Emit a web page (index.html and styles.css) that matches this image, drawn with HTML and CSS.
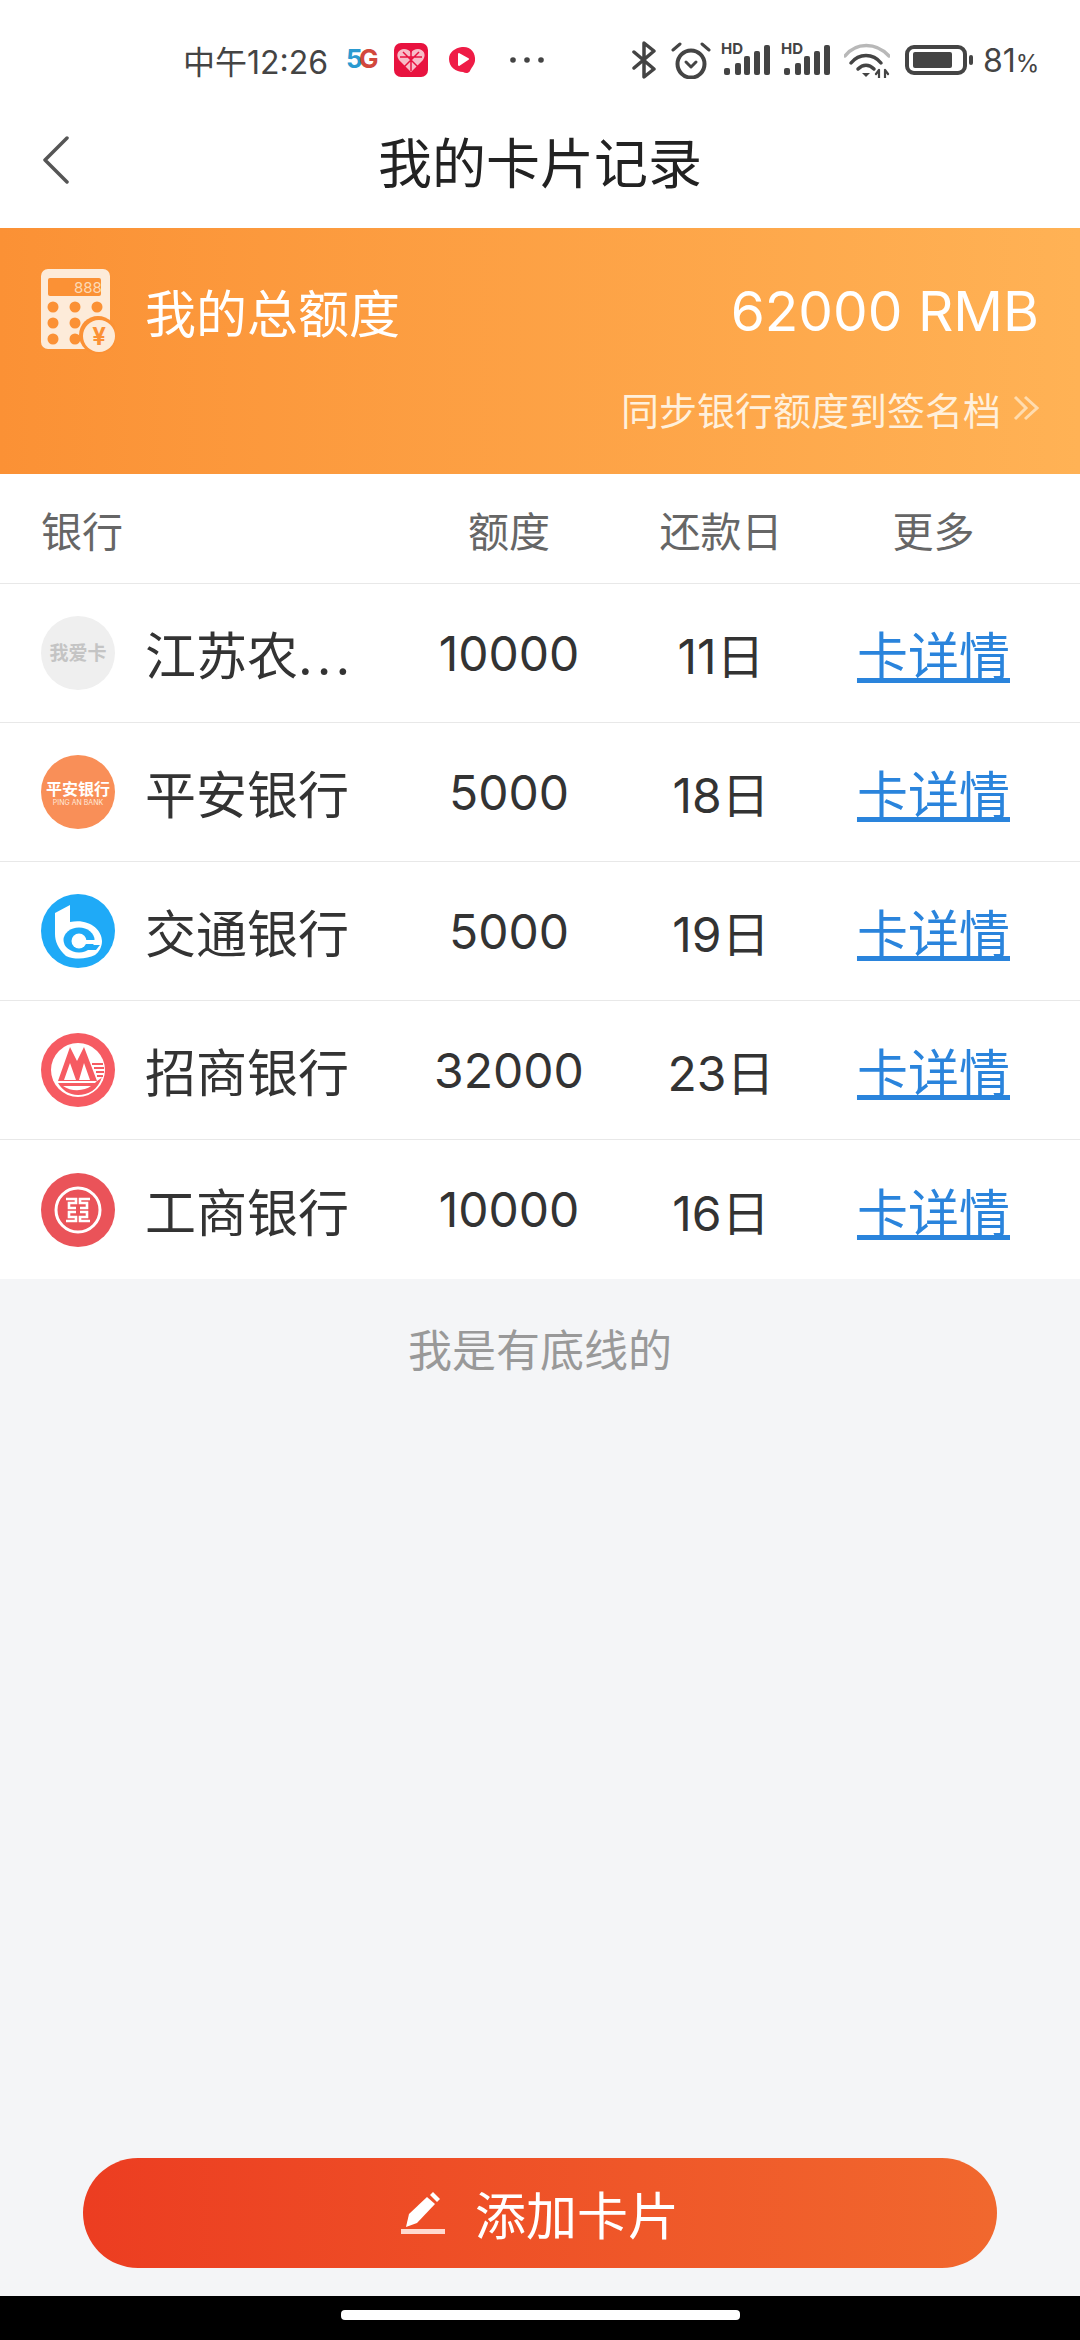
FILE: index.html
```html
<!DOCTYPE html>
<html lang="zh-CN">
<head>
	<meta charset="UTF-8">
	<title>我的卡片记录</title>
	<link rel="stylesheet" href="styles.css">
</head>
<body>
	<div id="page">
		<div class="status">
			<div class="status-left">
				<span class="time">中午12:26</span>
				<svg class="ic-5g" width="36" height="30" viewBox="0 0 36 30"><text x="1" y="23" class="five">5</text><text x="14" y="23" class="gee">G</text></svg>
				<svg class="ic-app" width="34" height="34" viewBox="0 0 34 34">
					<rect width="34" height="34" rx="7" fill="#e8123f"/>
					<path d="M17 29 L5 17 C1 11 5 6 10 6 C13 6 15.500 7 17 10 C18.500 7 21 6 24 6 C29 6 33 11 29 17 Z" fill="#f7bdc8"/>
					<path d="M17 8 V28 M6 14 H28 M9 9 L25 25 M25 9 L9 25" stroke="#e8123f" stroke-width="1.500"/>
				</svg>
				<svg class="ic-play" width="27" height="28" viewBox="0 0 27 28">
					<path d="M13 1 C21 0 27 6 26 15 C25 20 22 22 21 25 C19 28 16 27 14 26 C7 26 0 21 0 13 C0 6 6 2 13 1 Z" fill="#ef1c46"/>
					<path d="M10 8 L19 13 L10 19 Z" fill="#fff" stroke="#fff" stroke-width="2" stroke-linejoin="round"/>
				</svg>
				<svg class="ic-dots" width="36" height="8" viewBox="0 0 36 8"><circle cx="4" cy="4" r="2.800"/><circle cx="18" cy="4" r="2.800"/><circle cx="32" cy="4" r="2.800"/></svg>
			</div>
			<div class="status-right">
				<svg width="24" height="38" viewBox="0 0 24 38" fill="none" stroke="#444" stroke-width="3.500" stroke-linecap="round" stroke-linejoin="round"><path d="M2 11 L22 28 L12 36 V2 L22 10 L2 27"/></svg>
				<svg class="ic-alarm" width="40" height="37" viewBox="0 0 40 37" fill="none" stroke="#444" stroke-linecap="round" stroke-linejoin="round">
					<circle cx="20" cy="22" r="13.500" stroke-width="4"/>
					<path d="M2 8 L9 2 M38 8 L31 2" stroke-width="3"/>
					<path d="M15 20 L20 25 L25 20" stroke-width="3"/>
				</svg>
				<svg class="ic-signal" width="50" height="41" viewBox="0 -8 50 41">
					<text x="0" y="12" class="hd">HD</text>
					<rect x="3" y="26" width="6" height="7" rx="2"/>
					<rect x="14" y="21" width="6" height="12" rx="2"/>
					<rect x="23" y="14" width="6" height="19" rx="2"/>
					<rect x="33" y="9" width="6" height="24" rx="2"/>
					<rect x="43" y="3" width="6" height="30" rx="2"/>
				</svg>
				<svg class="ic-signal" width="50" height="41" viewBox="0 -8 50 41">
					<text x="0" y="12" class="hd">HD</text>
					<rect x="3" y="26" width="6" height="7" rx="2"/>
					<rect x="14" y="21" width="6" height="12" rx="2"/>
					<rect x="23" y="14" width="6" height="19" rx="2"/>
					<rect x="33" y="9" width="6" height="24" rx="2"/>
					<rect x="43" y="3" width="6" height="30" rx="2"/>
				</svg>
				<svg class="ic-wifi" width="46" height="35" viewBox="0 0 46 35" fill="none" stroke-linecap="round">
					<path d="M1 13 C12 -1 32 -1 45 13" stroke="#b8b8b8" stroke-width="3.500"/>
					<path d="M7 20 C15 10 29 10 37 20" stroke="#444" stroke-width="3.500"/>
					<path d="M14 26 C19 21 25 21 30 26" stroke="#444" stroke-width="3.500"/>
					<path d="M18 30 L26 30 L22 34 Z" fill="#444"/>
					<path d="M35 27 V35 M41 35 V27 M32 31 L35 27 M41 27 L44 31" stroke="#444" stroke-width="2.200"/>
				</svg>
				<svg class="ic-batt" width="68" height="30" viewBox="0 0 68 30">
					<rect x="2" y="2" width="58" height="26" rx="7" fill="none" stroke="#444" stroke-width="4"/>
					<rect x="8" y="7" width="39" height="16" rx="2" fill="#444"/>
					<rect x="64" y="10" width="4" height="10" rx="2" fill="#444"/>
				</svg>
				<span class="pct">81<small>%</small></span>
			</div>
		</div>

		<div class="header">
			<svg class="back" width="28" height="48" viewBox="0 0 28 48" fill="none" stroke="#555" stroke-width="3.500" stroke-linecap="round" stroke-linejoin="round"><path d="M25 2 L3 24 L25 46"/></svg>
			<h1 class="title">我的卡片记录</h1>
		</div>

		<div class="banner">
			<div class="banner-top">
				<div class="banner-name">
					<svg width="74" height="85" viewBox="0 0 74 85">
						<rect width="69" height="80" rx="7" fill="#fdebd9"/>
						<rect x="7" y="9" width="53" height="18" rx="2" fill="#fb9135"/>
						<text x="33" y="24" class="calc-num">888</text>
						<g fill="#fb9135">
							<circle cx="12" cy="38" r="5.500"/><circle cx="34" cy="38" r="5.500"/><circle cx="56" cy="38" r="5.500"/>
							<circle cx="12" cy="54" r="5.500"/><circle cx="34" cy="54" r="5.500"/>
							<circle cx="12" cy="70" r="5.500"/><circle cx="34" cy="70" r="5.500"/>
							<circle cx="57" cy="66" r="19"/>
						</g>
						<circle cx="58" cy="67" r="16" fill="#fdebd9"/>
						<text x="58" y="76" class="calc-yen">¥</text>
					</svg>
					<span class="banner-label">我的总额度</span>
				</div>
				<span class="total">62000 RMB</span>
			</div>
			<div class="banner-sync">
				<span>同步银行额度到签名档</span>
				<svg width="26" height="26" viewBox="0 0 26 26" fill="none" stroke="#ffdcae" stroke-width="3"><path d="M2 2 L13 13 L2 24 M12 2 L24 13 L12 24"/></svg>
			</div>
		</div>

		<div class="table">
			<div class="row row-head">
				<span class="col-bank">银行</span>
				<span>额度</span>
				<span>还款日</span>
				<span>更多</span>
			</div>
			<div class="row">
				<div class="col-bank">
					<svg class="logo" viewBox="0 0 74 74">
						<circle cx="37" cy="37" r="37" fill="#efefef"/>
						<text x="37" y="44" class="logo-gray">我爱卡</text>
					</svg>
					<span>江苏农<span class="dots">...</span></span>
				</div>
				<span>10000</span>
				<span>11日</span>
				<a href="#" class="more">卡详情</a>
			</div>
			<div class="row">
				<div class="col-bank">
					<svg class="logo" viewBox="0 0 74 74">
						<circle cx="37" cy="37" r="37" fill="#f98f58"/>
						<text x="37" y="40" class="logo-pa">平安银行</text>
						<text x="37" y="50" class="logo-pa-en">PING AN BANK</text>
					</svg>
					<span>平安银行</span>
				</div>
				<span>5000</span>
				<span>18日</span>
				<a href="#" class="more">卡详情</a>
			</div>
			<div class="row">
				<div class="col-bank">
					<svg class="logo" viewBox="0 0 74 74">
						<circle cx="37" cy="37" r="37" fill="#1faaf7"/>
						<path d="M14 19 L29 11 V28 C47 24 61 35 61 47 C61 53 58 58 54 61 C46 65 34 66 25 62 C17 55 14 47 14 40 Z" fill="#fff"/>
						<ellipse cx="38" cy="46" rx="15.500" ry="12.500" fill="#1faaf7"/>
						<circle cx="38" cy="47" r="7.500" fill="#fff"/>
						<rect x="38" y="46" width="19" height="4" fill="#fff"/>
						<path d="M46 51 H59 L55 56 H44 Z" fill="#1faaf7"/>
					</svg>
					<span>交通银行</span>
				</div>
				<span>5000</span>
				<span>19日</span>
				<a href="#" class="more">卡详情</a>
			</div>
			<div class="row">
				<div class="col-bank">
					<svg class="logo" viewBox="0 0 74 74">
						<circle cx="37" cy="37" r="37" fill="#f65b62"/>
						<circle cx="37" cy="37" r="27" fill="#fff"/>
						<path d="M17 48 L29 14 L36 28 L43 14 L56 48 Z" fill="#f65b62"/>
						<path d="M23 47 L29 30 L35 47 Z M38 47 L43 30 L49 47 Z" fill="#fff"/>
						<path d="M51 31 H62 M53 35 H63 M55 39 H63 M56 43 H62" stroke="#f65b62" stroke-width="1.800"/>
						<path d="M17 50 H54 C56 47 59 47 61 44 C57 57 47 62 37 62 C28 62 21 57 17 50 Z" fill="#f65b62"/>
						<path d="M22 53 H50 C44 58 30 59 22 53 Z" fill="#fff"/>
					</svg>
					<span>招商银行</span>
				</div>
				<span>32000</span>
				<span>23日</span>
				<a href="#" class="more">卡详情</a>
			</div>
			<div class="row">
				<div class="col-bank">
					<svg class="logo" viewBox="0 0 74 74">
						<circle cx="37" cy="37" r="37" fill="#ea5359"/>
						<circle cx="37" cy="37" r="22" fill="none" stroke="#fff" stroke-width="3"/>
						<path d="M25 26 H35 V30 H28 V35 H35 M25 48 H35 V44 H28 V39 H35 M49 26 H39 V30 H46 V35 H39 M49 48 H39 V44 H46 V39 H39" fill="none" stroke="#fff" stroke-width="2.600"/>
					</svg>
					<span>工商银行</span>
				</div>
				<span>10000</span>
				<span>16日</span>
				<a href="#" class="more">卡详情</a>
			</div>
		</div>

		<p class="end-tip">我是有底线的</p>

		<div class="add-wrap">
			<div class="add-btn">
				<svg width="44" height="42" viewBox="0 0 44 42">
					<path d="M5 35 L8 22 L26 5 L34 12 L16 31 Z" fill="#fff"/>
					<path d="M29 3 L32 0 L39 7 L36 10 Z" fill="#fff"/>
					<rect y="37" width="44" height="5" fill="#ffd9cf"/>
				</svg>
				<span>添加卡片</span>
			</div>
		</div>

		<div class="nav-bar"><i class="home-pill"></i></div>
	</div>
</body>
</html>
```

FILE: styles.css
```css
*{
	margin: 0;
	padding: 0;
	box-sizing: border-box;
}
body{
	font-family: Inter, "Noto Sans CJK SC", sans-serif;
	color: #333;
	background: #f4f5f7;
}
a{
	color: #2a84dc;
}
.hd{
	font-size: 15px;
	font-weight: 700;
	fill: #444;
}
#page{
	width: 1080px;
	height: 2340px;
	display: flex;
	flex-direction: column;
}

/* status bar */
.status{
	height: 92px;
	padding: 28px 46px 0 183px;
	background: #fff;
	display: flex;
	justify-content: space-between;
	align-items: center;
	color: #444;
}
.status-left, .status-right{
	display: flex;
	align-items: center;
}
.time{
	font-size: 32px;
	width: 162px;
}
.five{
	font-size: 26px;
	font-weight: 700;
	fill: #2a9ad0;
}
.gee{
	font-size: 26px;
	font-weight: 700;
	fill: #d2483c;
}
.ic-app{
	margin-left: 13px;
}
.ic-play{
	margin-left: 21px;
}
.ic-dots{
	margin-left: 33px;
	fill: #444;
}
.ic-alarm{
	margin-left: 15px;
}
.ic-signal{
	margin-left: 10px;
	margin-bottom: 11px;
	fill: #444;
}
.ic-wifi{
	margin-left: 13px;
}
.ic-batt{
	margin-left: 15px;
}
.pct{
	margin-left: 10px;
	font-size: 32px;
	width: 51px;
	white-space: nowrap;
}
.pct small{
	font-size: 24px;
}

/* title */
.header{
	height: 136px;
	background: #fff;
	position: relative;
	display: flex;
	align-items: center;
	justify-content: center;
}
.back{
	position: absolute;
	left: 42px;
	top: 44px;
}
.title{
	font-size: 54px;
	font-weight: 400;
	color: #222;
}

/* orange banner */
.banner{
	height: 246px;
	padding: 38px 41px 0;
	background: linear-gradient(90deg, #fb9135, #ffb255);
	color: #fff;
}
.banner-top{
	height: 90px;
	display: flex;
	justify-content: space-between;
	align-items: center;
}
.banner-name{
	display: flex;
	align-items: center;
	gap: 30px;
}
.banner-label{
	font-size: 51px;
}
.calc-num{
	font-size: 15px;
	fill: #fdd9b4;
}
.calc-yen{
	font-size: 24px;
	font-weight: 700;
	fill: #fb9135;
	text-anchor: middle;
}
.total{
	font-size: 55px;
}
.banner-sync{
	margin-top: 27px;
	height: 50px;
	display: flex;
	justify-content: flex-end;
	align-items: center;
	gap: 12px;
	font-size: 38px;
	color: #fff0dc;
}

/* card table */
.table{
	background: #fff;
}
.row{
	height: 139px;
	padding: 0 40px 0 41px;
	display: grid;
	grid-template-columns: 362px 212px 212px 213px;
	align-items: center;
	justify-items: center;
	font-size: 48px;
	border-bottom: 1px solid #e8e8e8;
}
.row:last-child{
	border-bottom: 0;
}
.row-head{
	height: 110px;
	font-size: 41px;
	color: #666;
}
.col-bank{
	justify-self: start;
	display: flex;
	align-items: center;
	gap: 30px;
	font-size: 51px;
}
.row-head .col-bank{
	font-size: 41px;
}
.more{
	font-size: 51px;
}
.dots{
	letter-spacing: 4px;
}
.logo{
	width: 74px;
	height: 74px;
	flex: none;
}
.logo-gray{
	font-size: 19px;
	font-weight: 700;
	fill: #c4c4c4;
	text-anchor: middle;
}
.logo-pa{
	font-size: 16px;
	font-weight: 700;
	fill: #fff;
	text-anchor: middle;
}
.logo-pa-en{
	font-size: 7px;
	fill: #ffe9dc;
	text-anchor: middle;
}
.end-tip{
	margin-top: 44px;
	font-size: 44px;
	line-height: 56px;
	color: #999;
	text-align: center;
}

/* bottom */
.add-wrap{
	margin-top: auto;
	padding: 0 83px 28px;
}
.add-btn{
	height: 110px;
	border-radius: 55px;
	background: linear-gradient(90deg, #ec3d21, #f1682e);
	color: #fff;
	font-size: 51px;
	display: flex;
	justify-content: center;
	align-items: center;
	gap: 30px;
}
.nav-bar{
	height: 44px;
	background: #000;
	padding-top: 14px;
	display: flex;
	justify-content: center;
}
.home-pill{
	width: 399px;
	height: 10px;
	border-radius: 4px;
	background: #fff;
}
```
